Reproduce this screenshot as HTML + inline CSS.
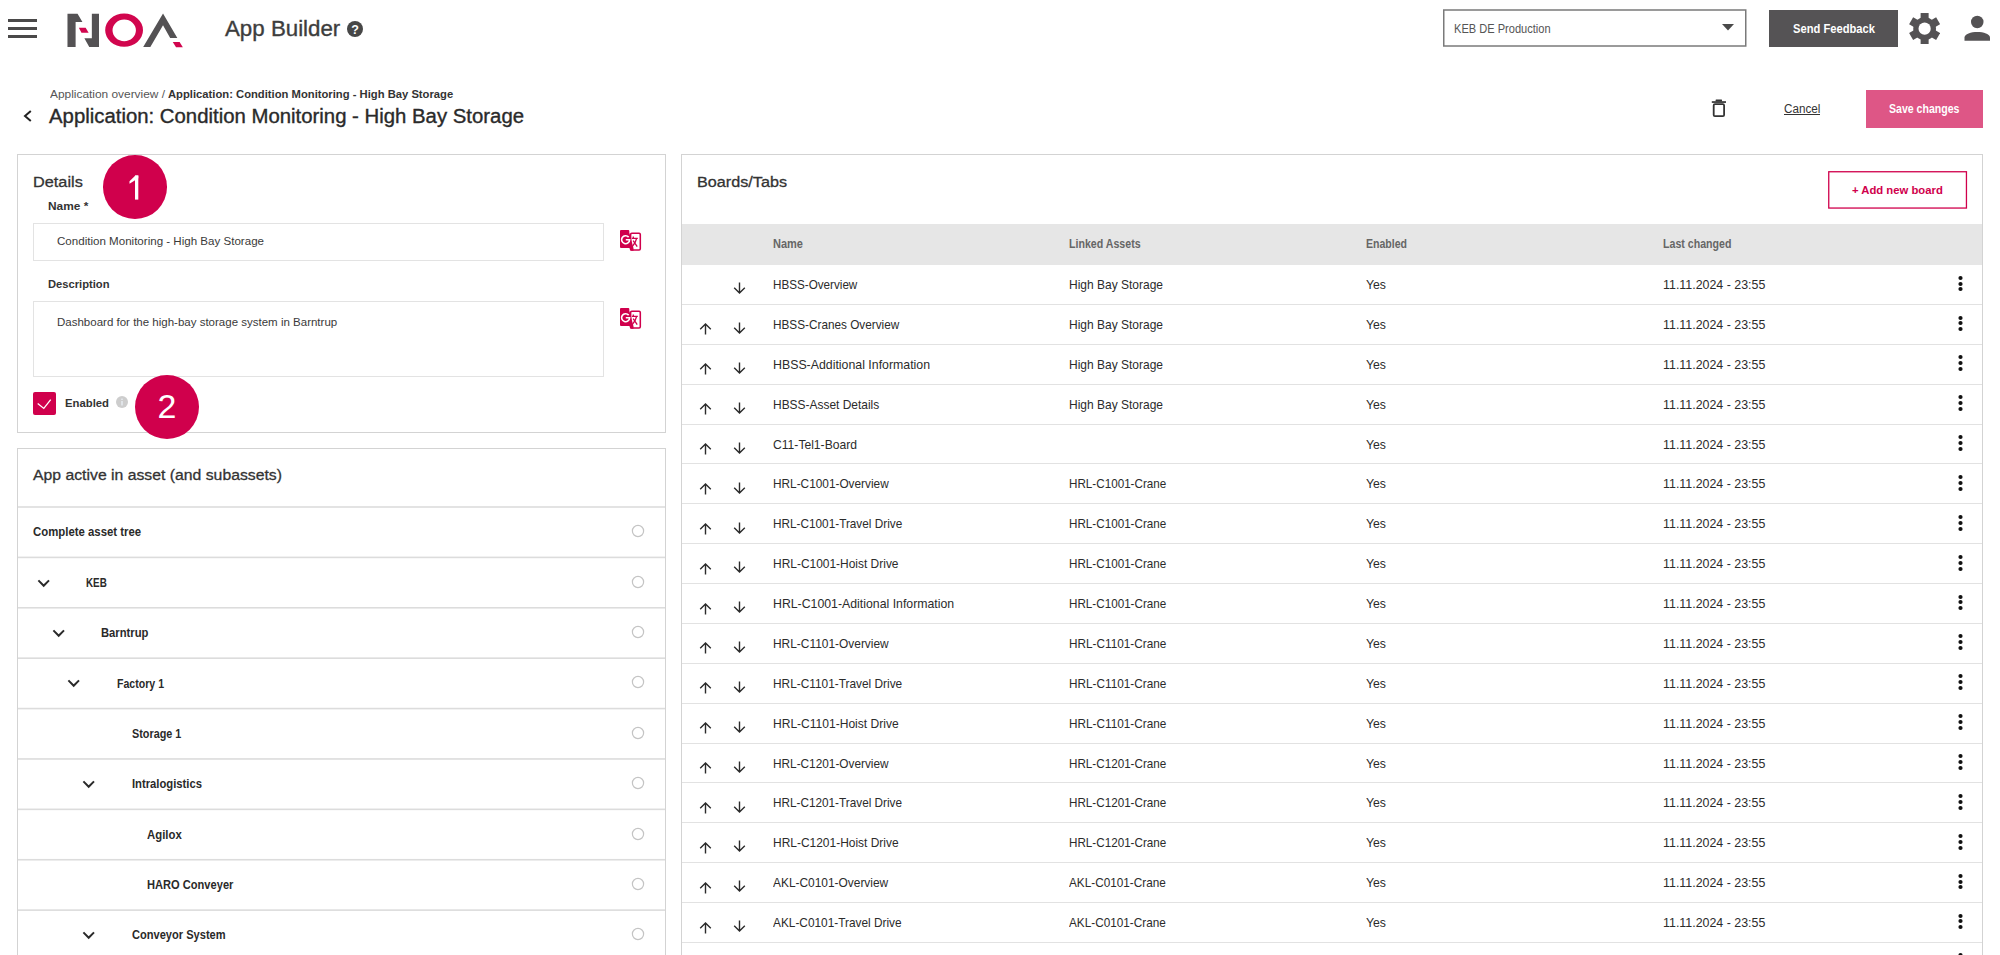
<!DOCTYPE html>
<html><head><meta charset="utf-8"><title>App Builder</title>
<style>
html,body{margin:0;padding:0;background:#fff;}
body{width:2000px;height:955px;overflow:hidden;position:relative;font-family:"Liberation Sans",sans-serif;}
div,svg{box-sizing:content-box;}
.t{position:absolute;white-space:nowrap;transform-origin:0 0;}
</style></head><body>
<div style="position:absolute;left:7.5px;top:19px;width:29.5px;height:3px;background:#4a4949"></div>
<div style="position:absolute;left:7.5px;top:27px;width:29.5px;height:3px;background:#4a4949"></div>
<div style="position:absolute;left:7.5px;top:35px;width:29.5px;height:3px;background:#4a4949"></div>
<svg style="position:absolute;left:60px;top:8px" width="130" height="44" viewBox="0 0 2000 677">
<polygon fill="#545254" points="115,90 270,90 345,215 240,215 240,600 115,600"/>
<polygon fill="#545254" points="490,90 600,90 600,600 450,600 375,465 490,465"/>
<polygon fill="#d1064e" points="290,305 395,305 440,380 330,380"/>
<path fill="#d1064e" fill-rule="evenodd" d="M695,341 a291,256 0 1,0 582,0 a291,256 0 1,0 -582,0 Z M808,344 a180,166 0 1,0 360,0 a180,166 0 1,0 -360,0 Z"/>
<polygon fill="#545254" points="1585,85 1805,460 1695,460 1585,265 1390,600 1280,600"/>
<polygon fill="#d1064e" points="1735,525 1840,525 1890,605 1785,605"/>
</svg>
<svg style="position:absolute;left:347px;top:20.5px" width="16" height="16" viewBox="0 0 16 16"><circle cx="8" cy="8" r="8" fill="#474747"/><text x="8" y="12.6" text-anchor="middle" font-family="Liberation Sans" font-weight="700" font-size="12.5" fill="#fff">?</text></svg>
<svg style="position:absolute;left:1442px;top:8px" width="306" height="40" viewBox="0 0 306 40"><rect x="1.75" y="2" width="302" height="36" fill="none" stroke="#7a7a7a" stroke-width="1.5"/></svg>
<svg style="position:absolute;left:1721.5px;top:24px" width="12" height="6.5" viewBox="0 0 12 6.5"><polygon points="0,0 12,0 6,6.5" fill="#4a4a4a"/></svg>
<div style="position:absolute;left:1769px;top:9.5px;width:128.5px;height:37.5px;background:#555355"></div>
<svg style="position:absolute;left:1908.75px;top:12.75px" width="31.25" height="31.25" viewBox="-15.625 -15.625 31.25 31.25"><g fill="#545254"><circle r="11.4"/><rect x="-4" y="-15.6" width="8" height="8" transform="rotate(0)"/><rect x="-4" y="-15.6" width="8" height="8" transform="rotate(60)"/><rect x="-4" y="-15.6" width="8" height="8" transform="rotate(120)"/><rect x="-4" y="-15.6" width="8" height="8" transform="rotate(180)"/><rect x="-4" y="-15.6" width="8" height="8" transform="rotate(240)"/><rect x="-4" y="-15.6" width="8" height="8" transform="rotate(300)"/></g><circle r="6.1" fill="#fff"/></svg>
<svg style="position:absolute;left:1964px;top:15px" width="27" height="26" viewBox="1964 15 27 26"><circle cx="1977.25" cy="22" r="6.25" fill="#545254"/><path d="M1964.5,40.75 L1964.5,37.5 C1964.5,34 1971,32 1977.25,32 C1983.5,32 1990,34 1990,37.5 L1990,40.75 Z" fill="#545254"/></svg>
<svg style="position:absolute;left:22px;top:109px" width="12" height="14" viewBox="0 0 12 14"><polyline points="8.8,2 3,7 8.8,12" fill="none" stroke="#222" stroke-width="2"/></svg>
<svg style="position:absolute;left:1710px;top:98px" width="18" height="20" viewBox="0 0 18 20"><rect x="1.8" y="3.2" width="14.2" height="1.7" fill="#333"/><rect x="5.6" y="1.4" width="6.4" height="2" rx="0.5" fill="#333"/><rect x="3.7" y="6.2" width="10.4" height="12" rx="1.2" fill="none" stroke="#333" stroke-width="1.8"/></svg>
<div style="position:absolute;left:1784px;top:114px;width:36.3px;height:1.2px;background:#333"></div>
<div style="position:absolute;left:1866px;top:89.8px;width:117px;height:38px;background:#de5686"></div>
<div style="position:absolute;left:17px;top:154px;width:647px;height:276.8px;border:1px solid #d3d3d3"></div>
<div style="position:absolute;left:33px;top:223px;width:568.7px;height:36.4px;border:1px solid #e3e3e3"></div>
<div style="position:absolute;left:33px;top:301px;width:568.7px;height:74px;border:1px solid #e3e3e3"></div>
<svg style="position:absolute;left:616px;top:227px" width="30" height="27" viewBox="0 0 30 27">
<rect x="14.6" y="6.3" width="9.7" height="16.6" rx="1.2" fill="#fff" stroke="#d0004c" stroke-width="1.55"/>
<path d="M5,3 H12.3 Q13.3,3 13.3,4 V5.6 L17.5,21.2 V23.7 H15 Q14.2,23.7 14,23 L13.6,21 H5 Q4,21 4,20 V4 Q4,3 5,3 Z" fill="#d0004c"/>
<path d="M12.66,10.13 A4,4 0 1,0 13.6,12.7 H9.8" fill="none" stroke="#fff" stroke-width="1.6"/>
<path d="M15.8,11.3 H21.8 M17.3,9.4 V11.3 M20.6,11.3 Q19.6,16 16.6,19 M17.2,13.6 L21.2,19.6" fill="none" stroke="#d0004c" stroke-width="1.3"/>
</svg>
<svg style="position:absolute;left:616px;top:305px" width="30" height="27" viewBox="0 0 30 27">
<rect x="14.6" y="6.3" width="9.7" height="16.6" rx="1.2" fill="#fff" stroke="#d0004c" stroke-width="1.55"/>
<path d="M5,3 H12.3 Q13.3,3 13.3,4 V5.6 L17.5,21.2 V23.7 H15 Q14.2,23.7 14,23 L13.6,21 H5 Q4,21 4,20 V4 Q4,3 5,3 Z" fill="#d0004c"/>
<path d="M12.66,10.13 A4,4 0 1,0 13.6,12.7 H9.8" fill="none" stroke="#fff" stroke-width="1.6"/>
<path d="M15.8,11.3 H21.8 M17.3,9.4 V11.3 M20.6,11.3 Q19.6,16 16.6,19 M17.2,13.6 L21.2,19.6" fill="none" stroke="#d0004c" stroke-width="1.3"/>
</svg>
<div style="position:absolute;left:32.9px;top:391.5px;width:23px;height:23px;border-radius:2px;background:#d0004c"></div>
<svg style="position:absolute;left:32.9px;top:391.5px" width="23" height="23" viewBox="0 0 23 23"><polyline points="4.7,11.5 10.8,16.4 17.7,7.6" fill="none" stroke="#fff" stroke-width="1.3"/></svg>
<svg style="position:absolute;left:116px;top:396.3px" width="12" height="12" viewBox="0 0 12 12"><circle cx="6" cy="6" r="6" fill="#cdcdcd"/><rect x="5.3" y="5" width="1.4" height="4.5" fill="#e9eef4"/><rect x="5.3" y="2.6" width="1.4" height="1.4" fill="#e9eef4"/></svg>
<div style="position:absolute;left:17px;top:448.3px;width:647px;height:600px;border:1px solid #d3d3d3"></div>
<svg style="position:absolute;left:18px;top:505px" width="647" height="5" viewBox="0 0 647 5"><rect x="0" y="1.20" width="647" height="1.6" fill="#dcdcdc"/></svg>
<svg style="position:absolute;left:18px;top:555px" width="647" height="5" viewBox="0 0 647 5"><rect x="0" y="1.59" width="647" height="1.6" fill="#dcdcdc"/></svg>
<svg style="position:absolute;left:18px;top:605px" width="647" height="5" viewBox="0 0 647 5"><rect x="0" y="1.98" width="647" height="1.6" fill="#dcdcdc"/></svg>
<svg style="position:absolute;left:18px;top:656px" width="647" height="5" viewBox="0 0 647 5"><rect x="0" y="1.37" width="647" height="1.6" fill="#dcdcdc"/></svg>
<svg style="position:absolute;left:18px;top:706px" width="647" height="5" viewBox="0 0 647 5"><rect x="0" y="1.76" width="647" height="1.6" fill="#dcdcdc"/></svg>
<svg style="position:absolute;left:18px;top:756px" width="647" height="5" viewBox="0 0 647 5"><rect x="0" y="2.15" width="647" height="1.6" fill="#dcdcdc"/></svg>
<svg style="position:absolute;left:18px;top:807px" width="647" height="5" viewBox="0 0 647 5"><rect x="0" y="1.54" width="647" height="1.6" fill="#dcdcdc"/></svg>
<svg style="position:absolute;left:18px;top:857px" width="647" height="5" viewBox="0 0 647 5"><rect x="0" y="1.93" width="647" height="1.6" fill="#dcdcdc"/></svg>
<svg style="position:absolute;left:18px;top:908px" width="647" height="5" viewBox="0 0 647 5"><rect x="0" y="1.32" width="647" height="1.6" fill="#dcdcdc"/></svg>
<svg style="position:absolute;left:630px;top:523.20px" width="16" height="16" viewBox="0 0 16 16"><circle cx="8" cy="8" r="5.6" fill="none" stroke="#c4c4c4" stroke-width="1.2"/></svg>
<svg style="position:absolute;left:36.8px;top:578.6px" width="13.4" height="9" viewBox="0 0 13.4 9"><polyline points="1.4,1.4 6.7,6.8 12,1.4" fill="none" stroke="#2a2a2a" stroke-width="2"/></svg>
<svg style="position:absolute;left:630px;top:573.59px" width="16" height="16" viewBox="0 0 16 16"><circle cx="8" cy="8" r="5.6" fill="none" stroke="#c4c4c4" stroke-width="1.2"/></svg>
<svg style="position:absolute;left:52.3px;top:629.0px" width="13.4" height="9" viewBox="0 0 13.4 9"><polyline points="1.4,1.4 6.7,6.8 12,1.4" fill="none" stroke="#2a2a2a" stroke-width="2"/></svg>
<svg style="position:absolute;left:630px;top:623.98px" width="16" height="16" viewBox="0 0 16 16"><circle cx="8" cy="8" r="5.6" fill="none" stroke="#c4c4c4" stroke-width="1.2"/></svg>
<svg style="position:absolute;left:67.2px;top:679.4px" width="13.4" height="9" viewBox="0 0 13.4 9"><polyline points="1.4,1.4 6.7,6.8 12,1.4" fill="none" stroke="#2a2a2a" stroke-width="2"/></svg>
<svg style="position:absolute;left:630px;top:674.37px" width="16" height="16" viewBox="0 0 16 16"><circle cx="8" cy="8" r="5.6" fill="none" stroke="#c4c4c4" stroke-width="1.2"/></svg>
<svg style="position:absolute;left:630px;top:724.76px" width="16" height="16" viewBox="0 0 16 16"><circle cx="8" cy="8" r="5.6" fill="none" stroke="#c4c4c4" stroke-width="1.2"/></svg>
<svg style="position:absolute;left:82.0px;top:780.2px" width="13.4" height="9" viewBox="0 0 13.4 9"><polyline points="1.4,1.4 6.7,6.8 12,1.4" fill="none" stroke="#2a2a2a" stroke-width="2"/></svg>
<svg style="position:absolute;left:630px;top:775.15px" width="16" height="16" viewBox="0 0 16 16"><circle cx="8" cy="8" r="5.6" fill="none" stroke="#c4c4c4" stroke-width="1.2"/></svg>
<svg style="position:absolute;left:630px;top:825.54px" width="16" height="16" viewBox="0 0 16 16"><circle cx="8" cy="8" r="5.6" fill="none" stroke="#c4c4c4" stroke-width="1.2"/></svg>
<svg style="position:absolute;left:630px;top:875.93px" width="16" height="16" viewBox="0 0 16 16"><circle cx="8" cy="8" r="5.6" fill="none" stroke="#c4c4c4" stroke-width="1.2"/></svg>
<svg style="position:absolute;left:82.0px;top:931.3px" width="13.4" height="9" viewBox="0 0 13.4 9"><polyline points="1.4,1.4 6.7,6.8 12,1.4" fill="none" stroke="#2a2a2a" stroke-width="2"/></svg>
<svg style="position:absolute;left:630px;top:926.32px" width="16" height="16" viewBox="0 0 16 16"><circle cx="8" cy="8" r="5.6" fill="none" stroke="#c4c4c4" stroke-width="1.2"/></svg>
<div style="position:absolute;left:681px;top:154px;width:1300px;height:900px;border:1px solid #d3d3d3"></div>
<svg style="position:absolute;left:1826px;top:169px" width="144" height="42" viewBox="0 0 144 42"><rect x="2.75" y="2.75" width="137.7" height="36.3" fill="none" stroke="#d0004c" stroke-width="1.3"/></svg>
<div style="position:absolute;left:682px;top:224.2px;width:1300px;height:40.4px;background:#e6e6e6"></div>
<div style="position:absolute;left:682px;top:304px;width:1300px;height:1px;background:#e2e2e2"></div>
<svg style="position:absolute;left:732.8px;top:282.2px" width="13" height="12" viewBox="0 0 13 12"><path d="M6.5,0.5 V11 M1.2,5.8 L6.5,11 L11.8,5.8" fill="none" stroke="#2b2b2b" stroke-width="1.4"/></svg>
<svg style="position:absolute;left:1956px;top:273.64px" width="9" height="8" viewBox="0 0 9 8"><circle cx="4.5" cy="4" r="2.1" fill="#111"/></svg>
<svg style="position:absolute;left:1956px;top:279.54px" width="9" height="8" viewBox="0 0 9 8"><circle cx="4.5" cy="4" r="2.1" fill="#111"/></svg>
<svg style="position:absolute;left:1956px;top:285.44px" width="9" height="8" viewBox="0 0 9 8"><circle cx="4.5" cy="4" r="2.1" fill="#111"/></svg>
<div style="position:absolute;left:682px;top:344px;width:1300px;height:1px;background:#e2e2e2"></div>
<svg style="position:absolute;left:732.8px;top:322.1px" width="13" height="12" viewBox="0 0 13 12"><path d="M6.5,0.5 V11 M1.2,5.8 L6.5,11 L11.8,5.8" fill="none" stroke="#2b2b2b" stroke-width="1.4"/></svg>
<svg style="position:absolute;left:699px;top:323.4px" width="13" height="12" viewBox="0 0 13 12"><path d="M6.5,11.5 V1 M1.2,6.2 L6.5,1 L11.8,6.2" fill="none" stroke="#2b2b2b" stroke-width="1.4"/></svg>
<svg style="position:absolute;left:1956px;top:313.51px" width="9" height="8" viewBox="0 0 9 8"><circle cx="4.5" cy="4" r="2.1" fill="#111"/></svg>
<svg style="position:absolute;left:1956px;top:319.41px" width="9" height="8" viewBox="0 0 9 8"><circle cx="4.5" cy="4" r="2.1" fill="#111"/></svg>
<svg style="position:absolute;left:1956px;top:325.31px" width="9" height="8" viewBox="0 0 9 8"><circle cx="4.5" cy="4" r="2.1" fill="#111"/></svg>
<div style="position:absolute;left:682px;top:384px;width:1300px;height:1px;background:#e2e2e2"></div>
<svg style="position:absolute;left:732.8px;top:362.0px" width="13" height="12" viewBox="0 0 13 12"><path d="M6.5,0.5 V11 M1.2,5.8 L6.5,11 L11.8,5.8" fill="none" stroke="#2b2b2b" stroke-width="1.4"/></svg>
<svg style="position:absolute;left:699px;top:363.3px" width="13" height="12" viewBox="0 0 13 12"><path d="M6.5,11.5 V1 M1.2,6.2 L6.5,1 L11.8,6.2" fill="none" stroke="#2b2b2b" stroke-width="1.4"/></svg>
<svg style="position:absolute;left:1956px;top:353.38px" width="9" height="8" viewBox="0 0 9 8"><circle cx="4.5" cy="4" r="2.1" fill="#111"/></svg>
<svg style="position:absolute;left:1956px;top:359.28px" width="9" height="8" viewBox="0 0 9 8"><circle cx="4.5" cy="4" r="2.1" fill="#111"/></svg>
<svg style="position:absolute;left:1956px;top:365.18px" width="9" height="8" viewBox="0 0 9 8"><circle cx="4.5" cy="4" r="2.1" fill="#111"/></svg>
<div style="position:absolute;left:682px;top:424px;width:1300px;height:1px;background:#e2e2e2"></div>
<svg style="position:absolute;left:732.8px;top:401.8px" width="13" height="12" viewBox="0 0 13 12"><path d="M6.5,0.5 V11 M1.2,5.8 L6.5,11 L11.8,5.8" fill="none" stroke="#2b2b2b" stroke-width="1.4"/></svg>
<svg style="position:absolute;left:699px;top:403.1px" width="13" height="12" viewBox="0 0 13 12"><path d="M6.5,11.5 V1 M1.2,6.2 L6.5,1 L11.8,6.2" fill="none" stroke="#2b2b2b" stroke-width="1.4"/></svg>
<svg style="position:absolute;left:1956px;top:393.25px" width="9" height="8" viewBox="0 0 9 8"><circle cx="4.5" cy="4" r="2.1" fill="#111"/></svg>
<svg style="position:absolute;left:1956px;top:399.15px" width="9" height="8" viewBox="0 0 9 8"><circle cx="4.5" cy="4" r="2.1" fill="#111"/></svg>
<svg style="position:absolute;left:1956px;top:405.05px" width="9" height="8" viewBox="0 0 9 8"><circle cx="4.5" cy="4" r="2.1" fill="#111"/></svg>
<div style="position:absolute;left:682px;top:463px;width:1300px;height:1px;background:#e2e2e2"></div>
<svg style="position:absolute;left:732.8px;top:441.7px" width="13" height="12" viewBox="0 0 13 12"><path d="M6.5,0.5 V11 M1.2,5.8 L6.5,11 L11.8,5.8" fill="none" stroke="#2b2b2b" stroke-width="1.4"/></svg>
<svg style="position:absolute;left:699px;top:443.0px" width="13" height="12" viewBox="0 0 13 12"><path d="M6.5,11.5 V1 M1.2,6.2 L6.5,1 L11.8,6.2" fill="none" stroke="#2b2b2b" stroke-width="1.4"/></svg>
<svg style="position:absolute;left:1956px;top:433.12px" width="9" height="8" viewBox="0 0 9 8"><circle cx="4.5" cy="4" r="2.1" fill="#111"/></svg>
<svg style="position:absolute;left:1956px;top:439.02px" width="9" height="8" viewBox="0 0 9 8"><circle cx="4.5" cy="4" r="2.1" fill="#111"/></svg>
<svg style="position:absolute;left:1956px;top:444.92px" width="9" height="8" viewBox="0 0 9 8"><circle cx="4.5" cy="4" r="2.1" fill="#111"/></svg>
<div style="position:absolute;left:682px;top:503px;width:1300px;height:1px;background:#e2e2e2"></div>
<svg style="position:absolute;left:732.8px;top:481.6px" width="13" height="12" viewBox="0 0 13 12"><path d="M6.5,0.5 V11 M1.2,5.8 L6.5,11 L11.8,5.8" fill="none" stroke="#2b2b2b" stroke-width="1.4"/></svg>
<svg style="position:absolute;left:699px;top:482.9px" width="13" height="12" viewBox="0 0 13 12"><path d="M6.5,11.5 V1 M1.2,6.2 L6.5,1 L11.8,6.2" fill="none" stroke="#2b2b2b" stroke-width="1.4"/></svg>
<svg style="position:absolute;left:1956px;top:472.99px" width="9" height="8" viewBox="0 0 9 8"><circle cx="4.5" cy="4" r="2.1" fill="#111"/></svg>
<svg style="position:absolute;left:1956px;top:478.89px" width="9" height="8" viewBox="0 0 9 8"><circle cx="4.5" cy="4" r="2.1" fill="#111"/></svg>
<svg style="position:absolute;left:1956px;top:484.79px" width="9" height="8" viewBox="0 0 9 8"><circle cx="4.5" cy="4" r="2.1" fill="#111"/></svg>
<div style="position:absolute;left:682px;top:543px;width:1300px;height:1px;background:#e2e2e2"></div>
<svg style="position:absolute;left:732.8px;top:521.5px" width="13" height="12" viewBox="0 0 13 12"><path d="M6.5,0.5 V11 M1.2,5.8 L6.5,11 L11.8,5.8" fill="none" stroke="#2b2b2b" stroke-width="1.4"/></svg>
<svg style="position:absolute;left:699px;top:522.8px" width="13" height="12" viewBox="0 0 13 12"><path d="M6.5,11.5 V1 M1.2,6.2 L6.5,1 L11.8,6.2" fill="none" stroke="#2b2b2b" stroke-width="1.4"/></svg>
<svg style="position:absolute;left:1956px;top:512.86px" width="9" height="8" viewBox="0 0 9 8"><circle cx="4.5" cy="4" r="2.1" fill="#111"/></svg>
<svg style="position:absolute;left:1956px;top:518.75px" width="9" height="8" viewBox="0 0 9 8"><circle cx="4.5" cy="4" r="2.1" fill="#111"/></svg>
<svg style="position:absolute;left:1956px;top:524.65px" width="9" height="8" viewBox="0 0 9 8"><circle cx="4.5" cy="4" r="2.1" fill="#111"/></svg>
<div style="position:absolute;left:682px;top:583px;width:1300px;height:1px;background:#e2e2e2"></div>
<svg style="position:absolute;left:732.8px;top:561.3px" width="13" height="12" viewBox="0 0 13 12"><path d="M6.5,0.5 V11 M1.2,5.8 L6.5,11 L11.8,5.8" fill="none" stroke="#2b2b2b" stroke-width="1.4"/></svg>
<svg style="position:absolute;left:699px;top:562.6px" width="13" height="12" viewBox="0 0 13 12"><path d="M6.5,11.5 V1 M1.2,6.2 L6.5,1 L11.8,6.2" fill="none" stroke="#2b2b2b" stroke-width="1.4"/></svg>
<svg style="position:absolute;left:1956px;top:552.73px" width="9" height="8" viewBox="0 0 9 8"><circle cx="4.5" cy="4" r="2.1" fill="#111"/></svg>
<svg style="position:absolute;left:1956px;top:558.62px" width="9" height="8" viewBox="0 0 9 8"><circle cx="4.5" cy="4" r="2.1" fill="#111"/></svg>
<svg style="position:absolute;left:1956px;top:564.52px" width="9" height="8" viewBox="0 0 9 8"><circle cx="4.5" cy="4" r="2.1" fill="#111"/></svg>
<div style="position:absolute;left:682px;top:623px;width:1300px;height:1px;background:#e2e2e2"></div>
<svg style="position:absolute;left:732.8px;top:601.2px" width="13" height="12" viewBox="0 0 13 12"><path d="M6.5,0.5 V11 M1.2,5.8 L6.5,11 L11.8,5.8" fill="none" stroke="#2b2b2b" stroke-width="1.4"/></svg>
<svg style="position:absolute;left:699px;top:602.5px" width="13" height="12" viewBox="0 0 13 12"><path d="M6.5,11.5 V1 M1.2,6.2 L6.5,1 L11.8,6.2" fill="none" stroke="#2b2b2b" stroke-width="1.4"/></svg>
<svg style="position:absolute;left:1956px;top:592.59px" width="9" height="8" viewBox="0 0 9 8"><circle cx="4.5" cy="4" r="2.1" fill="#111"/></svg>
<svg style="position:absolute;left:1956px;top:598.49px" width="9" height="8" viewBox="0 0 9 8"><circle cx="4.5" cy="4" r="2.1" fill="#111"/></svg>
<svg style="position:absolute;left:1956px;top:604.39px" width="9" height="8" viewBox="0 0 9 8"><circle cx="4.5" cy="4" r="2.1" fill="#111"/></svg>
<div style="position:absolute;left:682px;top:663px;width:1300px;height:1px;background:#e2e2e2"></div>
<svg style="position:absolute;left:732.8px;top:641.1px" width="13" height="12" viewBox="0 0 13 12"><path d="M6.5,0.5 V11 M1.2,5.8 L6.5,11 L11.8,5.8" fill="none" stroke="#2b2b2b" stroke-width="1.4"/></svg>
<svg style="position:absolute;left:699px;top:642.4px" width="13" height="12" viewBox="0 0 13 12"><path d="M6.5,11.5 V1 M1.2,6.2 L6.5,1 L11.8,6.2" fill="none" stroke="#2b2b2b" stroke-width="1.4"/></svg>
<svg style="position:absolute;left:1956px;top:632.47px" width="9" height="8" viewBox="0 0 9 8"><circle cx="4.5" cy="4" r="2.1" fill="#111"/></svg>
<svg style="position:absolute;left:1956px;top:638.37px" width="9" height="8" viewBox="0 0 9 8"><circle cx="4.5" cy="4" r="2.1" fill="#111"/></svg>
<svg style="position:absolute;left:1956px;top:644.26px" width="9" height="8" viewBox="0 0 9 8"><circle cx="4.5" cy="4" r="2.1" fill="#111"/></svg>
<div style="position:absolute;left:682px;top:703px;width:1300px;height:1px;background:#e2e2e2"></div>
<svg style="position:absolute;left:732.8px;top:680.9px" width="13" height="12" viewBox="0 0 13 12"><path d="M6.5,0.5 V11 M1.2,5.8 L6.5,11 L11.8,5.8" fill="none" stroke="#2b2b2b" stroke-width="1.4"/></svg>
<svg style="position:absolute;left:699px;top:682.2px" width="13" height="12" viewBox="0 0 13 12"><path d="M6.5,11.5 V1 M1.2,6.2 L6.5,1 L11.8,6.2" fill="none" stroke="#2b2b2b" stroke-width="1.4"/></svg>
<svg style="position:absolute;left:1956px;top:672.33px" width="9" height="8" viewBox="0 0 9 8"><circle cx="4.5" cy="4" r="2.1" fill="#111"/></svg>
<svg style="position:absolute;left:1956px;top:678.23px" width="9" height="8" viewBox="0 0 9 8"><circle cx="4.5" cy="4" r="2.1" fill="#111"/></svg>
<svg style="position:absolute;left:1956px;top:684.13px" width="9" height="8" viewBox="0 0 9 8"><circle cx="4.5" cy="4" r="2.1" fill="#111"/></svg>
<div style="position:absolute;left:682px;top:743px;width:1300px;height:1px;background:#e2e2e2"></div>
<svg style="position:absolute;left:732.8px;top:720.8px" width="13" height="12" viewBox="0 0 13 12"><path d="M6.5,0.5 V11 M1.2,5.8 L6.5,11 L11.8,5.8" fill="none" stroke="#2b2b2b" stroke-width="1.4"/></svg>
<svg style="position:absolute;left:699px;top:722.1px" width="13" height="12" viewBox="0 0 13 12"><path d="M6.5,11.5 V1 M1.2,6.2 L6.5,1 L11.8,6.2" fill="none" stroke="#2b2b2b" stroke-width="1.4"/></svg>
<svg style="position:absolute;left:1956px;top:712.21px" width="9" height="8" viewBox="0 0 9 8"><circle cx="4.5" cy="4" r="2.1" fill="#111"/></svg>
<svg style="position:absolute;left:1956px;top:718.11px" width="9" height="8" viewBox="0 0 9 8"><circle cx="4.5" cy="4" r="2.1" fill="#111"/></svg>
<svg style="position:absolute;left:1956px;top:724.00px" width="9" height="8" viewBox="0 0 9 8"><circle cx="4.5" cy="4" r="2.1" fill="#111"/></svg>
<div style="position:absolute;left:682px;top:782px;width:1300px;height:1px;background:#e2e2e2"></div>
<svg style="position:absolute;left:732.8px;top:760.7px" width="13" height="12" viewBox="0 0 13 12"><path d="M6.5,0.5 V11 M1.2,5.8 L6.5,11 L11.8,5.8" fill="none" stroke="#2b2b2b" stroke-width="1.4"/></svg>
<svg style="position:absolute;left:699px;top:762.0px" width="13" height="12" viewBox="0 0 13 12"><path d="M6.5,11.5 V1 M1.2,6.2 L6.5,1 L11.8,6.2" fill="none" stroke="#2b2b2b" stroke-width="1.4"/></svg>
<svg style="position:absolute;left:1956px;top:752.07px" width="9" height="8" viewBox="0 0 9 8"><circle cx="4.5" cy="4" r="2.1" fill="#111"/></svg>
<svg style="position:absolute;left:1956px;top:757.97px" width="9" height="8" viewBox="0 0 9 8"><circle cx="4.5" cy="4" r="2.1" fill="#111"/></svg>
<svg style="position:absolute;left:1956px;top:763.87px" width="9" height="8" viewBox="0 0 9 8"><circle cx="4.5" cy="4" r="2.1" fill="#111"/></svg>
<div style="position:absolute;left:682px;top:822px;width:1300px;height:1px;background:#e2e2e2"></div>
<svg style="position:absolute;left:732.8px;top:800.5px" width="13" height="12" viewBox="0 0 13 12"><path d="M6.5,0.5 V11 M1.2,5.8 L6.5,11 L11.8,5.8" fill="none" stroke="#2b2b2b" stroke-width="1.4"/></svg>
<svg style="position:absolute;left:699px;top:801.8px" width="13" height="12" viewBox="0 0 13 12"><path d="M6.5,11.5 V1 M1.2,6.2 L6.5,1 L11.8,6.2" fill="none" stroke="#2b2b2b" stroke-width="1.4"/></svg>
<svg style="position:absolute;left:1956px;top:791.94px" width="9" height="8" viewBox="0 0 9 8"><circle cx="4.5" cy="4" r="2.1" fill="#111"/></svg>
<svg style="position:absolute;left:1956px;top:797.84px" width="9" height="8" viewBox="0 0 9 8"><circle cx="4.5" cy="4" r="2.1" fill="#111"/></svg>
<svg style="position:absolute;left:1956px;top:803.74px" width="9" height="8" viewBox="0 0 9 8"><circle cx="4.5" cy="4" r="2.1" fill="#111"/></svg>
<div style="position:absolute;left:682px;top:862px;width:1300px;height:1px;background:#e2e2e2"></div>
<svg style="position:absolute;left:732.8px;top:840.4px" width="13" height="12" viewBox="0 0 13 12"><path d="M6.5,0.5 V11 M1.2,5.8 L6.5,11 L11.8,5.8" fill="none" stroke="#2b2b2b" stroke-width="1.4"/></svg>
<svg style="position:absolute;left:699px;top:841.7px" width="13" height="12" viewBox="0 0 13 12"><path d="M6.5,11.5 V1 M1.2,6.2 L6.5,1 L11.8,6.2" fill="none" stroke="#2b2b2b" stroke-width="1.4"/></svg>
<svg style="position:absolute;left:1956px;top:831.81px" width="9" height="8" viewBox="0 0 9 8"><circle cx="4.5" cy="4" r="2.1" fill="#111"/></svg>
<svg style="position:absolute;left:1956px;top:837.71px" width="9" height="8" viewBox="0 0 9 8"><circle cx="4.5" cy="4" r="2.1" fill="#111"/></svg>
<svg style="position:absolute;left:1956px;top:843.61px" width="9" height="8" viewBox="0 0 9 8"><circle cx="4.5" cy="4" r="2.1" fill="#111"/></svg>
<div style="position:absolute;left:682px;top:902px;width:1300px;height:1px;background:#e2e2e2"></div>
<svg style="position:absolute;left:732.8px;top:880.3px" width="13" height="12" viewBox="0 0 13 12"><path d="M6.5,0.5 V11 M1.2,5.8 L6.5,11 L11.8,5.8" fill="none" stroke="#2b2b2b" stroke-width="1.4"/></svg>
<svg style="position:absolute;left:699px;top:881.6px" width="13" height="12" viewBox="0 0 13 12"><path d="M6.5,11.5 V1 M1.2,6.2 L6.5,1 L11.8,6.2" fill="none" stroke="#2b2b2b" stroke-width="1.4"/></svg>
<svg style="position:absolute;left:1956px;top:871.68px" width="9" height="8" viewBox="0 0 9 8"><circle cx="4.5" cy="4" r="2.1" fill="#111"/></svg>
<svg style="position:absolute;left:1956px;top:877.58px" width="9" height="8" viewBox="0 0 9 8"><circle cx="4.5" cy="4" r="2.1" fill="#111"/></svg>
<svg style="position:absolute;left:1956px;top:883.48px" width="9" height="8" viewBox="0 0 9 8"><circle cx="4.5" cy="4" r="2.1" fill="#111"/></svg>
<div style="position:absolute;left:682px;top:942px;width:1300px;height:1px;background:#e2e2e2"></div>
<svg style="position:absolute;left:732.8px;top:920.2px" width="13" height="12" viewBox="0 0 13 12"><path d="M6.5,0.5 V11 M1.2,5.8 L6.5,11 L11.8,5.8" fill="none" stroke="#2b2b2b" stroke-width="1.4"/></svg>
<svg style="position:absolute;left:699px;top:921.5px" width="13" height="12" viewBox="0 0 13 12"><path d="M6.5,11.5 V1 M1.2,6.2 L6.5,1 L11.8,6.2" fill="none" stroke="#2b2b2b" stroke-width="1.4"/></svg>
<svg style="position:absolute;left:1956px;top:911.55px" width="9" height="8" viewBox="0 0 9 8"><circle cx="4.5" cy="4" r="2.1" fill="#111"/></svg>
<svg style="position:absolute;left:1956px;top:917.45px" width="9" height="8" viewBox="0 0 9 8"><circle cx="4.5" cy="4" r="2.1" fill="#111"/></svg>
<svg style="position:absolute;left:1956px;top:923.35px" width="9" height="8" viewBox="0 0 9 8"><circle cx="4.5" cy="4" r="2.1" fill="#111"/></svg>
<div style="position:absolute;left:682px;top:982px;width:1300px;height:1px;background:#e2e2e2"></div>
<svg style="position:absolute;left:732.8px;top:960.0px" width="13" height="12" viewBox="0 0 13 12"><path d="M6.5,0.5 V11 M1.2,5.8 L6.5,11 L11.8,5.8" fill="none" stroke="#2b2b2b" stroke-width="1.4"/></svg>
<svg style="position:absolute;left:699px;top:961.3px" width="13" height="12" viewBox="0 0 13 12"><path d="M6.5,11.5 V1 M1.2,6.2 L6.5,1 L11.8,6.2" fill="none" stroke="#2b2b2b" stroke-width="1.4"/></svg>
<svg style="position:absolute;left:1956px;top:951.42px" width="9" height="8" viewBox="0 0 9 8"><circle cx="4.5" cy="4" r="2.1" fill="#111"/></svg>
<svg style="position:absolute;left:1956px;top:957.32px" width="9" height="8" viewBox="0 0 9 8"><circle cx="4.5" cy="4" r="2.1" fill="#111"/></svg>
<svg style="position:absolute;left:1956px;top:963.22px" width="9" height="8" viewBox="0 0 9 8"><circle cx="4.5" cy="4" r="2.1" fill="#111"/></svg>
<div style="position:absolute;left:103px;top:155px;width:63.7px;height:63.7px;border-radius:50%;background:#d0004c"></div>
<div style="position:absolute;left:134.8px;top:375px;width:64px;height:64px;border-radius:50%;background:#d0004c"></div>
<svg style="position:absolute;left:120px;top:170px" width="30" height="34" viewBox="120 170 30 34"><rect x="135.0" y="175.5" width="3.3" height="24.1" fill="#fff"/><polygon points="135.4,175.5 138.3,175.5 138.3,178.2 129.5,183.8 129.5,181.2" fill="#fff"/></svg>
<div class="t" style="left:224.70px;top:17.93px;font-size:21.7px;line-height:21.7px;font-weight:400;color:#3d3d3d;transform:scaleX(1.0283);-webkit-text-stroke:0.35px currentColor;">App Builder</div>
<div class="t" style="left:1454.00px;top:22.97px;font-size:12.5px;line-height:12.5px;font-weight:400;color:#555;transform:scaleX(0.8856);">KEB DE Production</div>
<div class="t" style="left:1792.50px;top:22.70px;font-size:12.4px;line-height:12.4px;font-weight:700;color:#fff;transform:scaleX(0.9021);">Send Feedback</div>
<div class="t" style="left:49.50px;top:88.87px;font-size:11.5px;line-height:11.5px;font-weight:400;color:#555;transform:scaleX(1.0339);">Application overview / </div>
<div class="t" style="left:167.80px;top:88.87px;font-size:11.5px;line-height:11.5px;font-weight:700;color:#333;transform:scaleX(0.9769);">Application: Condition Monitoring - High Bay Storage</div>
<div class="t" style="left:49.00px;top:107.39px;font-size:19.5px;line-height:19.5px;font-weight:400;color:#2a2a2a;transform:scaleX(1.0434);-webkit-text-stroke:0.35px currentColor;">Application: Condition Monitoring - High Bay Storage</div>
<div class="t" style="left:1784.00px;top:102.64px;font-size:12px;line-height:12px;font-weight:400;color:#333;transform:scaleX(0.9718);">Cancel</div>
<div class="t" style="left:1889.00px;top:102.64px;font-size:12px;line-height:12px;font-weight:700;color:#fff;transform:scaleX(0.8795);">Save changes</div>
<div class="t" style="left:32.60px;top:174.02px;font-size:15.1px;line-height:15.1px;font-weight:400;color:#333;transform:scaleX(1.0794);-webkit-text-stroke:0.3px currentColor;">Details</div>
<div class="t" style="left:48.40px;top:201.31px;font-size:11.8px;line-height:11.8px;font-weight:700;color:#333;transform:scaleX(1.0075);">Name *</div>
<div class="t" style="left:56.90px;top:235.91px;font-size:11.8px;line-height:11.8px;font-weight:400;color:#3a3a3a;transform:scaleX(0.9804);">Condition Monitoring - High Bay Storage</div>
<div class="t" style="left:48.00px;top:278.61px;font-size:11.8px;line-height:11.8px;font-weight:700;color:#333;transform:scaleX(0.9477);">Description</div>
<div class="t" style="left:56.50px;top:316.71px;font-size:11.8px;line-height:11.8px;font-weight:400;color:#3a3a3a;transform:scaleX(0.9756);">Dashboard for the high-bay storage system in Barntrup</div>
<div class="t" style="left:65.00px;top:397.91px;font-size:11.8px;line-height:11.8px;font-weight:700;color:#333;transform:scaleX(0.9589);">Enabled</div>
<div class="t" style="left:33.10px;top:467.25px;font-size:15.3px;line-height:15.3px;font-weight:400;color:#333;transform:scaleX(1.0311);-webkit-text-stroke:0.3px currentColor;">App active in asset (and subassets)</div>
<div class="t" style="left:33.10px;top:527.33px;font-size:11.9px;line-height:11.9px;font-weight:700;color:#2a2a2a;transform:scaleX(0.9566);">Complete asset tree</div>
<div class="t" style="left:86.30px;top:577.72px;font-size:11.9px;line-height:11.9px;font-weight:700;color:#2a2a2a;transform:scaleX(0.8285);">KEB</div>
<div class="t" style="left:101.40px;top:628.11px;font-size:11.9px;line-height:11.9px;font-weight:700;color:#2a2a2a;transform:scaleX(0.9441);">Barntrup</div>
<div class="t" style="left:116.60px;top:678.50px;font-size:11.9px;line-height:11.9px;font-weight:700;color:#2a2a2a;transform:scaleX(0.8909);">Factory 1</div>
<div class="t" style="left:131.60px;top:728.89px;font-size:11.9px;line-height:11.9px;font-weight:700;color:#2a2a2a;transform:scaleX(0.9098);">Storage 1</div>
<div class="t" style="left:131.60px;top:779.28px;font-size:11.9px;line-height:11.9px;font-weight:700;color:#2a2a2a;transform:scaleX(0.9459);">Intralogistics</div>
<div class="t" style="left:146.60px;top:829.67px;font-size:11.9px;line-height:11.9px;font-weight:700;color:#2a2a2a;transform:scaleX(0.9550);">Agilox</div>
<div class="t" style="left:146.60px;top:880.06px;font-size:11.9px;line-height:11.9px;font-weight:700;color:#2a2a2a;transform:scaleX(0.9340);">HARO Conveyer</div>
<div class="t" style="left:131.60px;top:930.45px;font-size:11.9px;line-height:11.9px;font-weight:700;color:#2a2a2a;transform:scaleX(0.9318);">Conveyor System</div>
<div class="t" style="left:697.20px;top:173.66px;font-size:15.4px;line-height:15.4px;font-weight:400;color:#333;transform:scaleX(1.0520);-webkit-text-stroke:0.3px currentColor;">Boards/Tabs</div>
<div class="t" style="left:1852.00px;top:184.18px;font-size:11.6px;line-height:11.6px;font-weight:700;color:#d0004c;transform:scaleX(0.9731);">+ Add new board</div>
<div class="t" style="left:773.20px;top:239.13px;font-size:11.9px;line-height:11.9px;font-weight:700;color:#666;transform:scaleX(0.9263);">Name</div>
<div class="t" style="left:1069.00px;top:239.13px;font-size:11.9px;line-height:11.9px;font-weight:700;color:#666;transform:scaleX(0.8931);">Linked Assets</div>
<div class="t" style="left:1366.00px;top:239.13px;font-size:11.9px;line-height:11.9px;font-weight:700;color:#666;transform:scaleX(0.8865);">Enabled</div>
<div class="t" style="left:1663.40px;top:239.13px;font-size:11.9px;line-height:11.9px;font-weight:700;color:#666;transform:scaleX(0.8924);">Last changed</div>
<div class="t" style="left:773.20px;top:278.11px;font-size:13.5px;line-height:13.5px;font-weight:400;color:#2b2b2b;transform:scaleX(0.8644);">HBSS-Overview</div>
<div class="t" style="left:1069.00px;top:278.11px;font-size:13.5px;line-height:13.5px;font-weight:400;color:#2b2b2b;transform:scaleX(0.8884);">High Bay Storage</div>
<div class="t" style="left:1366.00px;top:278.11px;font-size:13.5px;line-height:13.5px;font-weight:400;color:#2b2b2b;transform:scaleX(0.9081);">Yes</div>
<div class="t" style="left:1663.40px;top:278.11px;font-size:13.5px;line-height:13.5px;font-weight:400;color:#2b2b2b;transform:scaleX(0.9188);">11.11.2024 - 23:55</div>
<div class="t" style="left:773.20px;top:317.98px;font-size:13.5px;line-height:13.5px;font-weight:400;color:#2b2b2b;transform:scaleX(0.8716);">HBSS-Cranes Overview</div>
<div class="t" style="left:1069.00px;top:317.98px;font-size:13.5px;line-height:13.5px;font-weight:400;color:#2b2b2b;transform:scaleX(0.8884);">High Bay Storage</div>
<div class="t" style="left:1366.00px;top:317.98px;font-size:13.5px;line-height:13.5px;font-weight:400;color:#2b2b2b;transform:scaleX(0.9081);">Yes</div>
<div class="t" style="left:1663.40px;top:317.98px;font-size:13.5px;line-height:13.5px;font-weight:400;color:#2b2b2b;transform:scaleX(0.9188);">11.11.2024 - 23:55</div>
<div class="t" style="left:773.20px;top:357.85px;font-size:13.5px;line-height:13.5px;font-weight:400;color:#2b2b2b;transform:scaleX(0.9142);">HBSS-Additional Information</div>
<div class="t" style="left:1069.00px;top:357.85px;font-size:13.5px;line-height:13.5px;font-weight:400;color:#2b2b2b;transform:scaleX(0.8884);">High Bay Storage</div>
<div class="t" style="left:1366.00px;top:357.85px;font-size:13.5px;line-height:13.5px;font-weight:400;color:#2b2b2b;transform:scaleX(0.9081);">Yes</div>
<div class="t" style="left:1663.40px;top:357.85px;font-size:13.5px;line-height:13.5px;font-weight:400;color:#2b2b2b;transform:scaleX(0.9188);">11.11.2024 - 23:55</div>
<div class="t" style="left:773.20px;top:397.72px;font-size:13.5px;line-height:13.5px;font-weight:400;color:#2b2b2b;transform:scaleX(0.8847);">HBSS-Asset Details</div>
<div class="t" style="left:1069.00px;top:397.72px;font-size:13.5px;line-height:13.5px;font-weight:400;color:#2b2b2b;transform:scaleX(0.8884);">High Bay Storage</div>
<div class="t" style="left:1366.00px;top:397.72px;font-size:13.5px;line-height:13.5px;font-weight:400;color:#2b2b2b;transform:scaleX(0.9081);">Yes</div>
<div class="t" style="left:1663.40px;top:397.72px;font-size:13.5px;line-height:13.5px;font-weight:400;color:#2b2b2b;transform:scaleX(0.9188);">11.11.2024 - 23:55</div>
<div class="t" style="left:773.20px;top:437.59px;font-size:13.5px;line-height:13.5px;font-weight:400;color:#2b2b2b;transform:scaleX(0.8980);">C11-Tel1-Board</div>
<div class="t" style="left:1366.00px;top:437.59px;font-size:13.5px;line-height:13.5px;font-weight:400;color:#2b2b2b;transform:scaleX(0.9081);">Yes</div>
<div class="t" style="left:1663.40px;top:437.59px;font-size:13.5px;line-height:13.5px;font-weight:400;color:#2b2b2b;transform:scaleX(0.9188);">11.11.2024 - 23:55</div>
<div class="t" style="left:773.20px;top:477.46px;font-size:13.5px;line-height:13.5px;font-weight:400;color:#2b2b2b;transform:scaleX(0.8762);">HRL-C1001-Overview</div>
<div class="t" style="left:1069.00px;top:477.46px;font-size:13.5px;line-height:13.5px;font-weight:400;color:#2b2b2b;transform:scaleX(0.8645);">HRL-C1001-Crane</div>
<div class="t" style="left:1366.00px;top:477.46px;font-size:13.5px;line-height:13.5px;font-weight:400;color:#2b2b2b;transform:scaleX(0.9081);">Yes</div>
<div class="t" style="left:1663.40px;top:477.46px;font-size:13.5px;line-height:13.5px;font-weight:400;color:#2b2b2b;transform:scaleX(0.9188);">11.11.2024 - 23:55</div>
<div class="t" style="left:773.20px;top:517.33px;font-size:13.5px;line-height:13.5px;font-weight:400;color:#2b2b2b;transform:scaleX(0.8727);">HRL-C1001-Travel Drive</div>
<div class="t" style="left:1069.00px;top:517.33px;font-size:13.5px;line-height:13.5px;font-weight:400;color:#2b2b2b;transform:scaleX(0.8645);">HRL-C1001-Crane</div>
<div class="t" style="left:1366.00px;top:517.33px;font-size:13.5px;line-height:13.5px;font-weight:400;color:#2b2b2b;transform:scaleX(0.9081);">Yes</div>
<div class="t" style="left:1663.40px;top:517.33px;font-size:13.5px;line-height:13.5px;font-weight:400;color:#2b2b2b;transform:scaleX(0.9188);">11.11.2024 - 23:55</div>
<div class="t" style="left:773.20px;top:557.20px;font-size:13.5px;line-height:13.5px;font-weight:400;color:#2b2b2b;transform:scaleX(0.8851);">HRL-C1001-Hoist Drive</div>
<div class="t" style="left:1069.00px;top:557.20px;font-size:13.5px;line-height:13.5px;font-weight:400;color:#2b2b2b;transform:scaleX(0.8645);">HRL-C1001-Crane</div>
<div class="t" style="left:1366.00px;top:557.20px;font-size:13.5px;line-height:13.5px;font-weight:400;color:#2b2b2b;transform:scaleX(0.9081);">Yes</div>
<div class="t" style="left:1663.40px;top:557.20px;font-size:13.5px;line-height:13.5px;font-weight:400;color:#2b2b2b;transform:scaleX(0.9188);">11.11.2024 - 23:55</div>
<div class="t" style="left:773.20px;top:597.07px;font-size:13.5px;line-height:13.5px;font-weight:400;color:#2b2b2b;transform:scaleX(0.9112);">HRL-C1001-Aditional Information</div>
<div class="t" style="left:1069.00px;top:597.07px;font-size:13.5px;line-height:13.5px;font-weight:400;color:#2b2b2b;transform:scaleX(0.8645);">HRL-C1001-Crane</div>
<div class="t" style="left:1366.00px;top:597.07px;font-size:13.5px;line-height:13.5px;font-weight:400;color:#2b2b2b;transform:scaleX(0.9081);">Yes</div>
<div class="t" style="left:1663.40px;top:597.07px;font-size:13.5px;line-height:13.5px;font-weight:400;color:#2b2b2b;transform:scaleX(0.9188);">11.11.2024 - 23:55</div>
<div class="t" style="left:773.20px;top:636.94px;font-size:13.5px;line-height:13.5px;font-weight:400;color:#2b2b2b;transform:scaleX(0.8829);">HRL-C1101-Overview</div>
<div class="t" style="left:1069.00px;top:636.94px;font-size:13.5px;line-height:13.5px;font-weight:400;color:#2b2b2b;transform:scaleX(0.8723);">HRL-C1101-Crane</div>
<div class="t" style="left:1366.00px;top:636.94px;font-size:13.5px;line-height:13.5px;font-weight:400;color:#2b2b2b;transform:scaleX(0.9081);">Yes</div>
<div class="t" style="left:1663.40px;top:636.94px;font-size:13.5px;line-height:13.5px;font-weight:400;color:#2b2b2b;transform:scaleX(0.9188);">11.11.2024 - 23:55</div>
<div class="t" style="left:773.20px;top:676.81px;font-size:13.5px;line-height:13.5px;font-weight:400;color:#2b2b2b;transform:scaleX(0.8787);">HRL-C1101-Travel Drive</div>
<div class="t" style="left:1069.00px;top:676.81px;font-size:13.5px;line-height:13.5px;font-weight:400;color:#2b2b2b;transform:scaleX(0.8723);">HRL-C1101-Crane</div>
<div class="t" style="left:1366.00px;top:676.81px;font-size:13.5px;line-height:13.5px;font-weight:400;color:#2b2b2b;transform:scaleX(0.9081);">Yes</div>
<div class="t" style="left:1663.40px;top:676.81px;font-size:13.5px;line-height:13.5px;font-weight:400;color:#2b2b2b;transform:scaleX(0.9188);">11.11.2024 - 23:55</div>
<div class="t" style="left:773.20px;top:716.68px;font-size:13.5px;line-height:13.5px;font-weight:400;color:#2b2b2b;transform:scaleX(0.8921);">HRL-C1101-Hoist Drive</div>
<div class="t" style="left:1069.00px;top:716.68px;font-size:13.5px;line-height:13.5px;font-weight:400;color:#2b2b2b;transform:scaleX(0.8723);">HRL-C1101-Crane</div>
<div class="t" style="left:1366.00px;top:716.68px;font-size:13.5px;line-height:13.5px;font-weight:400;color:#2b2b2b;transform:scaleX(0.9081);">Yes</div>
<div class="t" style="left:1663.40px;top:716.68px;font-size:13.5px;line-height:13.5px;font-weight:400;color:#2b2b2b;transform:scaleX(0.9188);">11.11.2024 - 23:55</div>
<div class="t" style="left:773.20px;top:756.55px;font-size:13.5px;line-height:13.5px;font-weight:400;color:#2b2b2b;transform:scaleX(0.8755);">HRL-C1201-Overview</div>
<div class="t" style="left:1069.00px;top:756.55px;font-size:13.5px;line-height:13.5px;font-weight:400;color:#2b2b2b;transform:scaleX(0.8645);">HRL-C1201-Crane</div>
<div class="t" style="left:1366.00px;top:756.55px;font-size:13.5px;line-height:13.5px;font-weight:400;color:#2b2b2b;transform:scaleX(0.9081);">Yes</div>
<div class="t" style="left:1663.40px;top:756.55px;font-size:13.5px;line-height:13.5px;font-weight:400;color:#2b2b2b;transform:scaleX(0.9188);">11.11.2024 - 23:55</div>
<div class="t" style="left:773.20px;top:796.42px;font-size:13.5px;line-height:13.5px;font-weight:400;color:#2b2b2b;transform:scaleX(0.8714);">HRL-C1201-Travel Drive</div>
<div class="t" style="left:1069.00px;top:796.42px;font-size:13.5px;line-height:13.5px;font-weight:400;color:#2b2b2b;transform:scaleX(0.8645);">HRL-C1201-Crane</div>
<div class="t" style="left:1366.00px;top:796.42px;font-size:13.5px;line-height:13.5px;font-weight:400;color:#2b2b2b;transform:scaleX(0.9081);">Yes</div>
<div class="t" style="left:1663.40px;top:796.42px;font-size:13.5px;line-height:13.5px;font-weight:400;color:#2b2b2b;transform:scaleX(0.9188);">11.11.2024 - 23:55</div>
<div class="t" style="left:773.20px;top:836.29px;font-size:13.5px;line-height:13.5px;font-weight:400;color:#2b2b2b;transform:scaleX(0.8858);">HRL-C1201-Hoist Drive</div>
<div class="t" style="left:1069.00px;top:836.29px;font-size:13.5px;line-height:13.5px;font-weight:400;color:#2b2b2b;transform:scaleX(0.8645);">HRL-C1201-Crane</div>
<div class="t" style="left:1366.00px;top:836.29px;font-size:13.5px;line-height:13.5px;font-weight:400;color:#2b2b2b;transform:scaleX(0.9081);">Yes</div>
<div class="t" style="left:1663.40px;top:836.29px;font-size:13.5px;line-height:13.5px;font-weight:400;color:#2b2b2b;transform:scaleX(0.9188);">11.11.2024 - 23:55</div>
<div class="t" style="left:773.20px;top:876.16px;font-size:13.5px;line-height:13.5px;font-weight:400;color:#2b2b2b;transform:scaleX(0.8824);">AKL-C0101-Overview</div>
<div class="t" style="left:1069.00px;top:876.16px;font-size:13.5px;line-height:13.5px;font-weight:400;color:#2b2b2b;transform:scaleX(0.8716);">AKL-C0101-Crane</div>
<div class="t" style="left:1366.00px;top:876.16px;font-size:13.5px;line-height:13.5px;font-weight:400;color:#2b2b2b;transform:scaleX(0.9081);">Yes</div>
<div class="t" style="left:1663.40px;top:876.16px;font-size:13.5px;line-height:13.5px;font-weight:400;color:#2b2b2b;transform:scaleX(0.9188);">11.11.2024 - 23:55</div>
<div class="t" style="left:773.20px;top:916.03px;font-size:13.5px;line-height:13.5px;font-weight:400;color:#2b2b2b;transform:scaleX(0.8775);">AKL-C0101-Travel Drive</div>
<div class="t" style="left:1069.00px;top:916.03px;font-size:13.5px;line-height:13.5px;font-weight:400;color:#2b2b2b;transform:scaleX(0.8716);">AKL-C0101-Crane</div>
<div class="t" style="left:1366.00px;top:916.03px;font-size:13.5px;line-height:13.5px;font-weight:400;color:#2b2b2b;transform:scaleX(0.9081);">Yes</div>
<div class="t" style="left:1663.40px;top:916.03px;font-size:13.5px;line-height:13.5px;font-weight:400;color:#2b2b2b;transform:scaleX(0.9188);">11.11.2024 - 23:55</div>
<div class="t" style="left:773.20px;top:955.90px;font-size:13.5px;line-height:13.5px;font-weight:400;color:#2b2b2b;transform:scaleX(0.8952);">AKL-C0101-Hoist Drive</div>
<div class="t" style="left:1069.00px;top:955.90px;font-size:13.5px;line-height:13.5px;font-weight:400;color:#2b2b2b;transform:scaleX(0.8716);">AKL-C0101-Crane</div>
<div class="t" style="left:1366.00px;top:955.90px;font-size:13.5px;line-height:13.5px;font-weight:400;color:#2b2b2b;transform:scaleX(0.9081);">Yes</div>
<div class="t" style="left:1663.40px;top:955.90px;font-size:13.5px;line-height:13.5px;font-weight:400;color:#2b2b2b;transform:scaleX(0.9188);">11.11.2024 - 23:55</div>
<div class="t" style="left:157.50px;top:389.02px;font-size:34px;line-height:34px;font-weight:400;color:#fff;">2</div>
</body></html>
